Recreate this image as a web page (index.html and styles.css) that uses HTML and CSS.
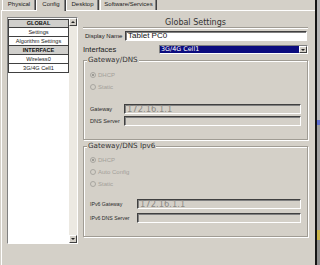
FILE: index.html
```html
<!DOCTYPE html>
<html>
<head>
<meta charset="utf-8">
<link rel="stylesheet" href="styles.css">
</head>
<body>
<div class="window">
  <div class="tabs">
    <div class="tab t1">Physical</div>
    <div class="tab t2 active">Config</div>
    <div class="tab t3">Desktop</div>
    <div class="tab t4">Software/Services</div>
  </div>
  <div class="panel">
    <div class="sidebar">
      <div class="list">
        <div class="item head">GLOBAL</div>
        <div class="item">Settings</div>
        <div class="item">Algorithm Settings</div>
        <div class="item head">INTERFACE</div>
        <div class="item">Wireless0</div>
        <div class="item">3G/4G Cell1</div>
      </div>
      <div class="scrollbar">
        <div class="arrow up"></div>
        <div class="track"></div>
        <div class="arrow down"></div>
      </div>
    </div>
    <div class="content">
      <div class="title">Global Settings</div>
      <div class="row display">
        <span class="label">Display Name</span>
        <div class="input white">Tablet PC0</div>
      </div>
      <div class="row iface">
        <span class="label big">Interfaces</span>
        <div class="select"><span class="sel-text">3G/4G Cell1</span><span class="sel-btn"></span></div>
      </div>
      <div class="group g1">
        <div class="legend">Gateway/DNS</div>
        <div class="radio first"><span class="dot on"></span>DHCP</div>
        <div class="radio"><span class="dot"></span>Static</div>
        <div class="field f-first"><span class="flabel">Gateway</span><div class="input dis">172.16.1.1</div></div>
        <div class="field"><span class="flabel">DNS Server</span><div class="input dis"></div></div>
      </div>
      <div class="group g2">
        <div class="legend">Gateway/DNS Ipv6</div>
        <div class="radio first"><span class="dot on"></span>DHCP</div>
        <div class="radio"><span class="dot"></span>Auto Config</div>
        <div class="radio"><span class="dot"></span>Static</div>
        <div class="field f-first"><span class="flabel wide">IPv6 Gateway</span><div class="input dis">172.16.1.1</div></div>
        <div class="field f-second"><span class="flabel wide">IPv6 DNS Server</span><div class="input dis"></div></div>
      </div>
    </div>
  </div>
</div>
</body>
</html>
```

FILE: styles.css
```css
* { box-sizing: border-box; }
html, body { margin: 0; padding: 0; }
body {
  width: 320px;
  height: 265px;
  overflow: hidden;
  font-family: "Liberation Sans", Arial, sans-serif;
  color: #222;
  background: linear-gradient(to bottom,
    #b4b4b4 0, #b4b4b4 120px,
    #6070d0 120px, #6070d0 125px,
    #a0a0a0 125px, #a0a0a0 230px,
    #c9b44a 230px, #c9b44a 240px,
    #8e8e8e 240px);
}
.window {
  width: 317px;
  height: 265px;
  background: #d4d0c8;
  border-right: 2px solid #141414;
  display: flex;
  flex-direction: column;
}
.tabs {
  height: 10px;
  display: flex;
  align-items: flex-end;
  padding-left: 2px;
  position: relative;
  z-index: 1;
}
.tab {
  height: 10px;
  border-left: 1px solid #fff;
  border-right: 1px solid #404040;
  box-shadow: inset -1px 0 0 #808080;
  font-size: 6px;
  line-height: 9px;
  text-align: center;
  color: #1a1a1a;
  white-space: nowrap;
}
.t1 { width: 34px; }
.t2 { width: 30px; }
.t3 { width: 33px; }
.t4 { width: 57px; margin-left: 1px; }
.tab.active {
  height: 11px;
  margin-bottom: -1px;
  background: #d4d0c8;
  line-height: 8px;
}
.panel {
  flex: 1;
  margin-left: 1px;
  border-top: 1px solid #fff;
  border-left: 1px solid #fff;
  display: flex;
  align-items: flex-start;
  gap: 5px;
  padding: 6px 0 0 5px;
}
.sidebar {
  width: 71px;
  height: 227px;
  border: 1px solid;
  border-color: #808080 #fff #fff #808080;
  display: flex;
}
.list {
  width: 61px;
  background: #fff;
  padding-top: 1px;
  display: flex;
  flex-direction: column;
}
.item {
  height: 9px;
  border: 1px solid #404040;
  border-top: none;
  font-size: 5.6px;
  line-height: 8px;
  text-align: center;
  color: #1a1a1a;
  white-space: nowrap;
}
.item:first-child { border-top: 1px solid #404040; line-height: 7px; }
.item.head {
  background: #d0cfcc;
  font-weight: bold;
  color: #111;
}
.scrollbar {
  width: 8px;
  display: flex;
  flex-direction: column;
  background: #ece9e2;
}
.track { flex: 1; }
.arrow {
  height: 8px;
  background: #d4d0c8;
  border: 1px solid;
  border-color: #fff #404040 #404040 #fff;
  display: flex;
  align-items: center;
  justify-content: center;
}
.arrow::after {
  content: "";
  width: 0;
  height: 0;
  border-left: 2px solid transparent;
  border-right: 2px solid transparent;
}
.arrow.up::after { border-bottom: 2px solid #222; }
.arrow.down::after { border-top: 2px solid #222; }
.content {
  width: 225px;
  display: flex;
  flex-direction: column;
}
.title {
  height: 11px;
  font-family: "DejaVu Sans", sans-serif;
  font-size: 8px;
  line-height: 12px;
  text-align: center;
  color: #333;
  border-bottom: 1px solid #a09c94;
  box-shadow: 0 1px 0 #fff;
}
.row {
  display: flex;
  align-items: center;
}
.display { margin-top: 3px; height: 10px; margin-right: 1px; }
.iface { margin-top: 4px; height: 9px; }
.label {
  width: 42px;
  padding-left: 2px;
  font-size: 6px;
  color: #1a1a1a;
  white-space: nowrap;
}
.label.big { width: 76px; font-size: 7.6px; padding-left: 0; color: #222; }
.input {
  flex: 1;
  height: 100%;
  border: 1px solid;
  border-color: #404040 #fff #fff #404040;
  box-shadow: inset 1px 1px 0 #808080;
  font-family: "DejaVu Sans", sans-serif;
  font-size: 8.4px;
  line-height: 8px;
  padding-left: 2px;
  white-space: nowrap;
}
.input.white { background: #fff; color: #111; font-family: "Liberation Sans", sans-serif; font-size: 8px; }
.input.dis { background: #d4d0c8; color: #8c8a86; }
.select {
  flex: 1;
  height: 100%;
  display: flex;
  border: 1px solid;
  border-color: #808080 #fff #fff #808080;
  background: #0c0c7e;
}
.sel-text {
  flex: 1;
  color: #fff;
  font-family: "DejaVu Sans", sans-serif;
  font-size: 6.4px;
  line-height: 7px;
  padding-left: 1px;
}
.sel-btn {
  width: 8px;
  background: #d4d0c8;
  border: 1px solid;
  border-color: #fff #404040 #404040 #fff;
  display: flex;
  align-items: center;
  justify-content: center;
}
.sel-btn::after {
  content: "";
  border-left: 2px solid transparent;
  border-right: 2px solid transparent;
  border-top: 2px solid #222;
}
.group {
  border: 1px solid #a09c94;
  box-shadow: inset 1px 1px 0 #fff, 1px 1px 0 #fff;
  display: flex;
  flex-direction: column;
  padding: 0 6px 13px 6px;
}
.g1 { margin-top: 6px; height: 80px; }
.g2 { margin-top: 6px; height: 91px; }
.legend {
  align-self: flex-start;
  margin: -6px 0 0 -3px;
  padding: 0 1px;
  height: 10px;
  line-height: 10px;
  font-family: "DejaVu Sans", sans-serif;
  font-size: 7.2px;
  color: #333;
  background: #d4d0c8;
  white-space: nowrap;
}
.radio {
  height: 10px;
  margin-top: 2px;
  display: flex;
  align-items: center;
  gap: 2px;
  font-size: 6px;
  color: #a3a09a;
}
.g1 .radio.first { margin-top: 5px; }
.g2 .radio.first { margin-top: 4px; }
.dot {
  width: 6px;
  height: 6px;
  border-radius: 50%;
  border: 1px solid #a8a6a0;
  display: flex;
  align-items: center;
  justify-content: center;
}
.dot.on::after {
  content: "";
  width: 2px;
  height: 2px;
  border-radius: 50%;
  background: #8a8884;
}
.field {
  height: 10px;
  margin-top: 2px;
  display: flex;
  align-items: center;
}
.g1 .f-first { margin-top: 12px; }
.g2 .f-first { margin-top: 10px; }
.g2 .f-second { margin-top: 4px; }
.flabel {
  width: 34px;
  font-size: 5.6px;
  color: #2a2a2a;
  white-space: nowrap;
}
.flabel.wide { width: 47px; font-size: 5.2px; }
```
